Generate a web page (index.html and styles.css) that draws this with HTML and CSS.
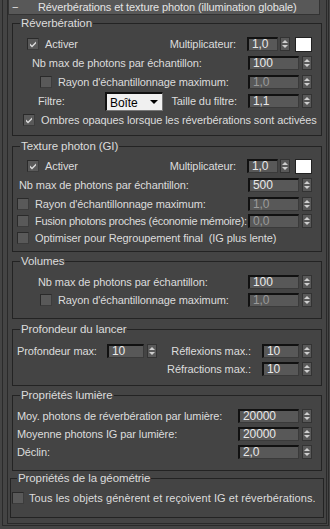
FILE: index.html
```html
<!DOCTYPE html>
<html>
<head>
  <title>Réverbérations et texture photon</title>
  <meta name="viewport" content="width=device-width, initial-scale=1.0">
  <link rel="stylesheet" href="styles.css">
</head>
<body>
  <div class="frame">
    <div class="rollout">
      <div class="rollout-head">
        <span class="minus">−</span>
        <span class="title">Réverbérations et texture photon (illumination globale)</span>
      </div>

      <fieldset class="group g-reverb">
        <legend>Réverbération</legend>
        <div class="row">
          <label class="check on in-27">Activer</label>
          <span class="side">
            <span class="lbl">Multiplicateur:</span>
            <span class="spin"><span class="field w31">1,0</span><span class="arrows"></span></span>
            <span class="swatch"></span>
          </span>
        </div>
        <div class="row">
          <span class="lbl in-32">Nb max de photons par échantillon:</span>
          <span class="spin"><span class="field">100</span><span class="arrows"></span></span>
        </div>
        <div class="row">
          <label class="check in-40">Rayon d'échantillonnage maximum:</label>
          <span class="spin"><span class="field off">1,0</span><span class="arrows"></span></span>
        </div>
        <div class="row">
          <span class="lbl in-38 filter">Filtre:</span>
          <span class="combo">Boîte<span class="drop"></span></span>
          <span class="side">
            <span class="lbl">Taille du filtre:</span>
            <span class="spin"><span class="field">1,1</span><span class="arrows"></span></span>
          </span>
        </div>
        <div class="row">
          <label class="check on in-23">Ombres opaques lorsque les réverbérations sont activées</label>
        </div>
      </fieldset>

      <fieldset class="group g-texture">
        <legend>Texture photon (GI)</legend>
        <div class="row">
          <label class="check on in-27">Activer</label>
          <span class="side">
            <span class="lbl">Multiplicateur:</span>
            <span class="spin"><span class="field w31">1,0</span><span class="arrows"></span></span>
            <span class="swatch"></span>
          </span>
        </div>
        <div class="row tall">
          <span class="lbl in-19">Nb max de photons par échantillon:</span>
          <span class="spin"><span class="field">500</span><span class="arrows"></span></span>
        </div>
        <div class="row short">
          <label class="check in-17">Rayon d'échantillonnage maximum:</label>
          <span class="spin"><span class="field off">1,0</span><span class="arrows"></span></span>
        </div>
        <div class="row short">
          <label class="check in-17 squeeze">Fusion photons proches (économie mémoire):</label>
          <span class="spin"><span class="field off">0,0</span><span class="arrows"></span></span>
        </div>
        <div class="row short">
          <label class="check in-17">Optimiser pour Regroupement final&nbsp; (IG plus lente)</label>
        </div>
      </fieldset>

      <fieldset class="group g-volumes">
        <legend>Volumes</legend>
        <div class="row">
          <span class="lbl in-38">Nb max de photons par échantillon:</span>
          <span class="spin"><span class="field">100</span><span class="arrows"></span></span>
        </div>
        <div class="row">
          <label class="check in-40">Rayon d'échantillonnage maximum:</label>
          <span class="spin"><span class="field off">1,0</span><span class="arrows"></span></span>
        </div>
      </fieldset>

      <fieldset class="group g-depth">
        <legend>Profondeur du lancer</legend>
        <div class="row">
          <span class="depth-left">
            <span class="lbl in-17 depth-lbl">Profondeur max:</span>
            <span class="spin"><span class="field w37">10</span><span class="arrows"></span></span>
          </span>
          <span class="side">
            <span class="lbl">Réflexions max.:</span>
            <span class="spin"><span class="field w37">10</span><span class="arrows"></span></span>
          </span>
        </div>
        <div class="row">
          <span class="side">
            <span class="lbl">Réfractions max.:</span>
            <span class="spin"><span class="field w37">10</span><span class="arrows"></span></span>
          </span>
        </div>
      </fieldset>

      <fieldset class="group g-light">
        <legend>Propriétés lumière</legend>
        <div class="row">
          <span class="lbl in-17">Moy. photons de réverbération par lumière:</span>
          <span class="spin"><span class="field w61">20000</span><span class="arrows"></span></span>
        </div>
        <div class="row">
          <span class="lbl in-17">Moyenne photons IG par lumière:</span>
          <span class="spin"><span class="field w61">20000</span><span class="arrows"></span></span>
        </div>
        <div class="row short">
          <span class="lbl in-17">Déclin:</span>
          <span class="spin"><span class="field w61">2,0</span><span class="arrows"></span></span>
        </div>
      </fieldset>

      <fieldset class="group g-geom">
        <legend>Propriétés de la géométrie</legend>
        <div class="row">
          <label class="check in-14 big">Tous les objets génèrent et reçoivent IG et réverbérations.</label>
        </div>
      </fieldset>
    </div>
  </div>
</body>
</html>
```

FILE: styles.css
```css
body {
  margin: 0;
  background-color: #444;
  font-family: "Liberation Sans", Arial, sans-serif;
  font-size: 11px;
  letter-spacing: -0.1px;
  color: #dcdcdc;
}

.frame {
  margin-left: 2px;
  width: 325px;
  height: 525px;
  border-left: 1px solid #2a2a2a;
  border-right: 1px solid #2a2a2a;
  border-bottom: 1px solid #2a2a2a;
}

.rollout {
  margin-left: 4px;
  width: 318px;
  height: 523px;
  border-left: 1px solid #2a2a2a;
  border-right: 1px solid #2a2a2a;
  border-bottom: 1px solid #2a2a2a;
}

.rollout-head {
  display: flex;
  align-items: center;
  height: 14px;
  width: 310px;
  background-color: #585858;
  border: 1px solid #333;
  border-top: none;
  white-space: nowrap;
  overflow: hidden;
  font-size: 11px;
  color: #e4e4e4;
}

.minus {
  width: 26px;
  padding-left: 3px;
}

/* group boxes */
.group {
  min-width: 0;
  margin: 3px 0 0 4px;
  padding: 0 9px 0 0;
  width: 299px;
  border: 1px solid #232323;
}

.group legend {
  margin-left: 7px;
  padding: 0 1px;
  line-height: 14px;
  font-size: 11.5px;
}

.g-reverb { margin-top: 1px; padding-top: 5px; padding-bottom: 6px; }
.g-reverb .row + .row { margin-top: 1px; }
.g-texture { padding-top: 4px; padding-bottom: 5px; }
.g-volumes { margin-top: 2px; padding-top: 5px; padding-bottom: 9px; }
.g-depth { padding-top: 6px; padding-bottom: 7px; }
.g-light { margin-top: 2px; padding-top: 5px; padding-bottom: 10px; }
.g-geom { margin: 0 0 0 2px; width: 303px; padding-top: 4px; padding-bottom: 10px; }
.g-geom legend { margin-left: 6px; }

.row {
  display: flex;
  align-items: center;
  height: 18px;
  white-space: nowrap;
}

.row.tall { height: 20px; }
.row.short { height: 17px; }

.side {
  display: flex;
  align-items: center;
  margin-left: auto;
}

.side .lbl { margin-right: 11px; }

.spin {
  display: flex;
  align-items: center;
  margin-left: auto;
}

.side .spin { margin-left: 0; }

.field {
  box-sizing: border-box;
  width: 51px;
  height: 14px;
  line-height: 11px;
  padding-left: 3px;
  background-color: #585858;
  border-top: 2px solid #111;
  border-left: 2px solid #111;
  border-right: 1px solid #3a3a3a;
  border-bottom: 1px solid #3a3a3a;
  color: #e8e8e8;
  font-size: 12px;
}

.field.off { color: #9a9a9a; }
.w31 { width: 31px; }
.w37 { width: 37px; }
.w61 { width: 61px; }

.arrows {
  position: relative;
  box-sizing: border-box;
  width: 10px;
  height: 14px;
  margin-left: 3px;
  background-color: #595959;
  border: 1px solid #333;
}

.side .w31 + .arrows { margin-left: 2px; }

.arrows::before,
.arrows::after {
  content: "";
  position: absolute;
  left: 1px;
  border-left: 3px solid transparent;
  border-right: 3px solid transparent;
}

.arrows::before {
  top: 2px;
  border-bottom: 3px solid #cfcfcf;
}

.arrows::after {
  bottom: 2px;
  border-top: 3px solid #cfcfcf;
}

.swatch {
  box-sizing: border-box;
  width: 17px;
  height: 15px;
  margin-left: 5px;
  background-color: #fff;
  border: 1px solid #222;
}

/* checkboxes */
.check {
  display: flex;
  align-items: center;
}

.check::before {
  content: "";
  flex: none;
  box-sizing: border-box;
  width: 12px;
  height: 12px;
  margin-right: 6px;
  background-color: #595959;
  border-top: 1px solid #2a2a2a;
  border-left: 1px solid #2a2a2a;
  border-right: 1px solid #3c3c3c;
  border-bottom: 1px solid #3c3c3c;
}

.check.on::before {
  background-image: url("data:image/svg+xml,%3Csvg xmlns='http://www.w3.org/2000/svg' width='10' height='10'%3E%3Cpath d='M2 4.5 L4 6.5 L8 2.5 L8 4.5 L4 8.5 L2 6.5 Z' fill='%23dcdcdc'/%3E%3C/svg%3E");
  background-repeat: no-repeat;
  background-position: center;
}

.in-14 { margin-left: 1px; }
.in-17 { margin-left: 4px; }
.in-19 { margin-left: 6px; }
.in-23 { margin-left: 10px; }
.in-27 { margin-left: 14px; }
.in-32 { margin-left: 19px; }
.in-38 { margin-left: 25px; }
.in-40 { margin-left: 27px; }

.squeeze {
  flex: 1 1 0;
  min-width: 0;
  letter-spacing: -0.3px;
}

.big {
  font-size: 11px;
  letter-spacing: 0.07px;
}

.big::before { margin-right: 5px; }

/* filter combo */
.filter { width: 42px; }

.combo {
  position: relative;
  box-sizing: border-box;
  width: 58px;
  height: 19px;
  margin-left: 25px;
  padding: 2px 0 0 3px;
  background-color: #f0f0f0;
  border-top: 2px solid #111;
  border-left: 2px solid #111;
  border-right: 1px solid #777;
  border-bottom: 1px solid #777;
  color: #000;
  font-size: 12px;
}

.drop {
  position: absolute;
  right: 4px;
  top: 6px;
  border-left: 4px solid transparent;
  border-right: 4px solid transparent;
  border-top: 4px solid #000;
}

/* profondeur */
.depth-left {
  display: flex;
  align-items: center;
}

.depth-lbl { width: 90px; }
```
